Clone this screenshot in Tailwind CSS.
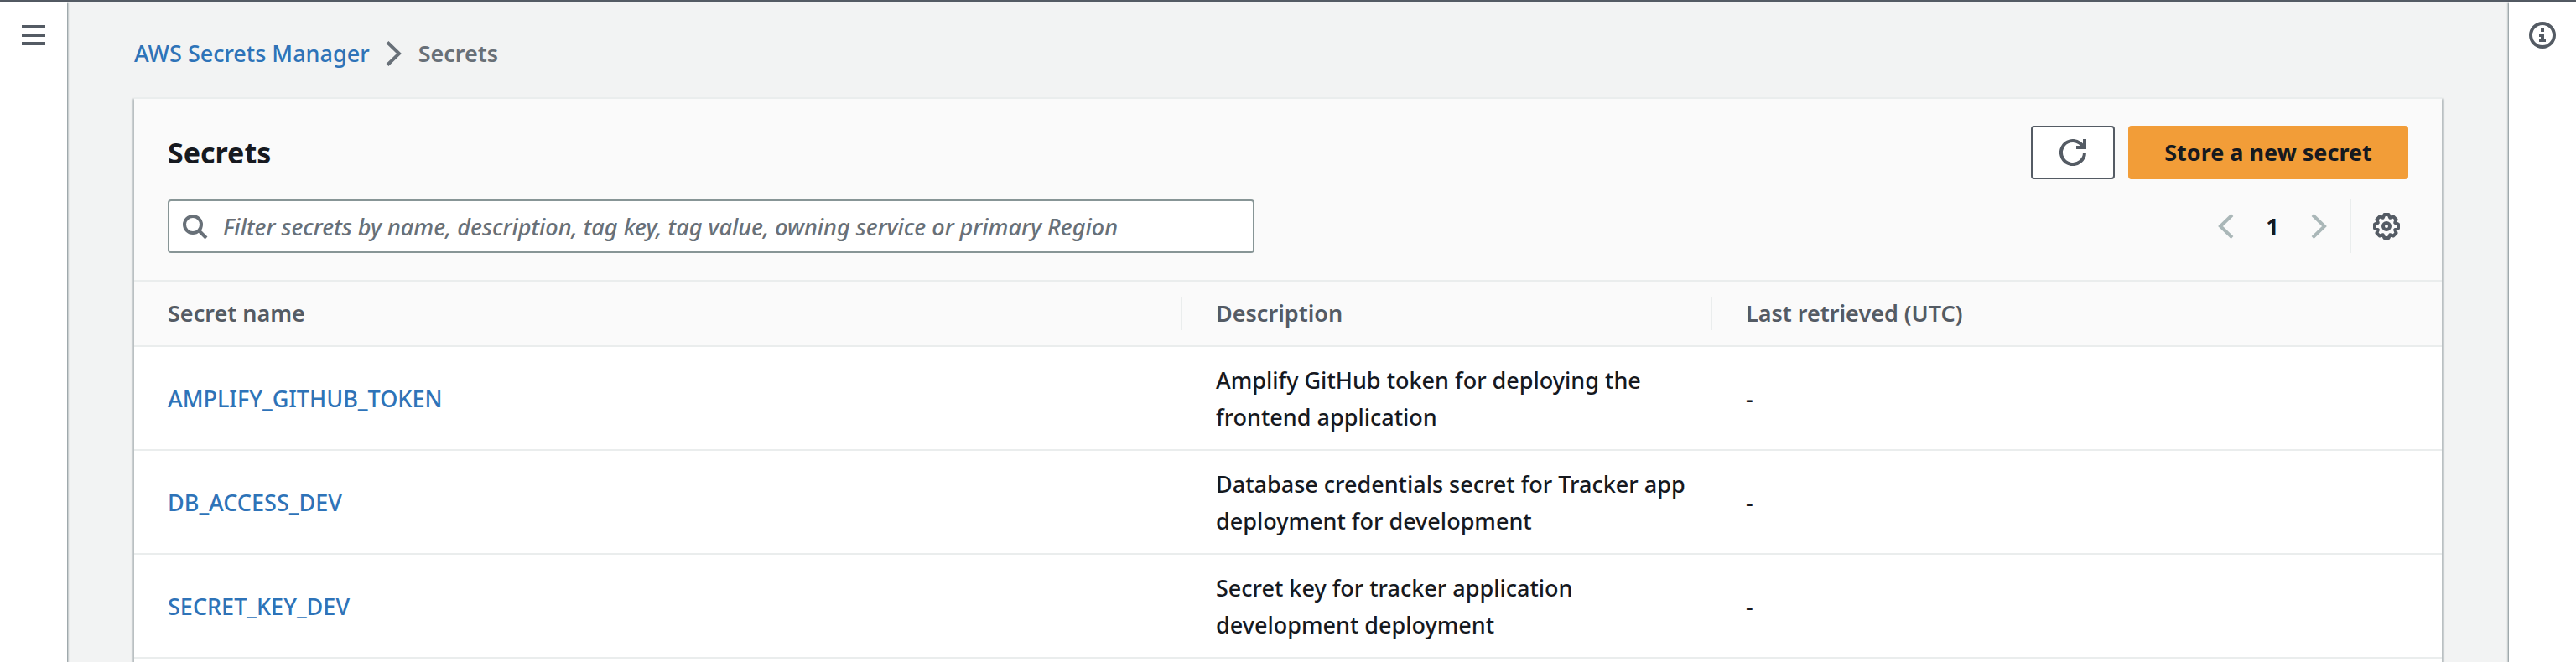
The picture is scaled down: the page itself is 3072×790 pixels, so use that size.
<!DOCTYPE html>
<html lang="en">
<head>
<meta charset="utf-8">
<title>AWS Secrets Manager</title>
<script src="https://cdn.jsdelivr.net/npm/@tailwindcss/browser@4"></script>
</head>
<body class="flex h-screen flex-col overflow-hidden bg-[#f2f3f3] font-['Noto_Sans',sans-serif] text-[27px] leading-[44px] font-medium text-[#16191f]">
<div class="h-0.5 shrink-0 bg-[#545b64]"></div>
<div class="flex min-h-0 flex-1">
  <nav class="z-10 w-20 shrink-0 bg-white pt-6 shadow-[1px_1px_2px_0_rgba(0,28,36,0.5)]" aria-label="Service navigation">
    <button type="button" aria-label="Open navigation" class="mx-auto block size-8 text-[#545b64]">
      <svg class="size-8" viewBox="0 0 32 32" fill="currentColor"><path d="M2 4h28v4H2zM2 14h28v4H2zM2 24h28v4H2z"/></svg>
    </button>
  </nav>
  <main class="flex min-w-0 flex-1 flex-col px-20">
    <nav class="flex h-[114px] shrink-0 items-start pt-10" aria-label="Breadcrumbs">
      <ol class="flex items-center">
        <li><a href="#" class="text-[#2e73b8]">AWS Secrets Manager</a></li>
        <li class="flex items-center font-semibold text-[#687078]" aria-current="page">
          <svg class="mr-3.5 ml-3 size-8" viewBox="0 0 32 32" fill="none" stroke="currentColor" stroke-width="4"><path d="M9 2.500 23 16 9 29.500"/></svg>
          Secrets
        </li>
      </ol>
    </nav>
    <section class="flex-1 border-t-2 border-[#eaeded] bg-white shadow-[2px_2px_2px_0_rgba(0,28,36,0.25),-2px_2px_2px_0_rgba(0,28,36,0.25)]">
      <header class="border-b-2 border-[#eaeded] bg-[#fafafa] px-10 py-8">
        <div class="flex h-16 items-center justify-between">
          <h1 class="text-[34px] font-bold">Secrets</h1>
          <div class="flex gap-4">
            <button type="button" aria-label="Refresh" class="flex h-16 w-[100px] items-center justify-center rounded-sm border-2 border-[#545b64] bg-white text-[#545b64]">
              <svg class="size-8" viewBox="0 0 32 32" fill="none" stroke="currentColor" stroke-width="4"><path d="M30 16A14 14 0 1 1 24.500 4.900Q27 7 29 10"/><path d="M30 0v10H20"/></svg>
            </button>
            <button type="button" class="h-16 w-[334px] rounded-sm bg-[#f29d38] font-bold">Store a new secret</button>
          </div>
        </div>
        <div class="mt-6 flex h-16 items-center justify-between">
          <label class="flex h-16 w-[1296px] items-center rounded-sm border-2 border-[#879596] bg-white pl-3.5 text-[#687078]">
            <svg class="size-8 shrink-0" viewBox="0 0 32 32" fill="none" stroke="currentColor" stroke-width="4"><circle cx="14" cy="14" r="10"/><path d="m21 21 9 9"/></svg>
            <input type="text" aria-label="Filter secrets" placeholder="Filter secrets by name, description, tag key, tag value, owning service or primary Region" class="ml-[18px] h-full min-w-0 flex-1 outline-none placeholder:text-[#687078] placeholder:italic">
          </label>
          <div class="flex items-center">
            <button type="button" aria-label="Previous page" class="text-[#aab7b8]"><svg class="size-8" viewBox="0 0 32 32" fill="none" stroke="currentColor" stroke-width="4"><path d="M24 2.500 10 16l14 13.500"/></svg></button>
            <button type="button" class="w-20 text-center font-bold" aria-current="page">1</button>
            <button type="button" aria-label="Next page" class="text-[#aab7b8]"><svg class="size-8" viewBox="0 0 32 32" fill="none" stroke="currentColor" stroke-width="4"><path d="M8 2.500 22 16 8 29.500"/></svg></button>
            <span class="mr-[26px] ml-5 h-16 w-0.5 bg-[#eaeded]"></span>
            <button type="button" aria-label="Preferences" class="mr-2.5 text-[#545b64]"><svg class="size-8" viewBox="0 0 32 32" fill="none" stroke="currentColor" stroke-width="4" stroke-linejoin="round"><path d="M13.500 2h5l1.700 3.800 3.900-1.400 3.500 3.500-1.400 3.900 3.800 1.700v5l-3.800 1.700 1.400 3.900-3.500 3.500-3.900-1.400-1.700 3.800h-5l-1.700-3.800-3.900 1.400-3.500-3.500 1.400-3.900L2 18.500v-5l3.800-1.700-1.400-3.900 3.500-3.500 3.900 1.400z"/><circle cx="16" cy="16" r="4"/></svg></button>
          </div>
        </div>
      </header>
      <table class="w-full table-fixed border-collapse text-left">
        <colgroup><col class="w-[1250px]"><col class="w-[632px]"><col></colgroup>
        <thead class="bg-[#fafafa] font-semibold text-[#545b64]">
          <tr class="border-b-2 border-[#eaeded]">
            <th class="py-[18px] font-semibold"><div class="h-10 border-r-2 border-[#eaeded] pl-10 leading-10">Secret name</div></th>
            <th class="py-[18px] font-semibold"><div class="h-10 border-r-2 border-[#eaeded] pl-10 leading-10">Description</div></th>
            <th class="py-[18px] font-semibold"><div class="h-10 pl-10 leading-10">Last retrieved (UTC)</div></th>
          </tr>
        </thead>
        <tbody>
          <tr class="border-b-2 border-[#eaeded]">
            <td class="pt-[18px] pb-4 pl-10"><a href="#" class="text-[#2e73b8]">AMPLIFY_GITHUB_TOKEN</a></td>
            <td class="pt-[18px] pr-4 pb-4 pl-10">Amplify GitHub token for deploying the frontend application</td>
            <td class="pt-[18px] pb-4 pl-10">-</td>
          </tr>
          <tr class="border-b-2 border-[#eaeded]">
            <td class="pt-[18px] pb-4 pl-10"><a href="#" class="text-[#2e73b8]">DB_ACCESS_DEV</a></td>
            <td class="pt-[18px] pr-4 pb-4 pl-10">Database credentials secret for Tracker app deployment for development</td>
            <td class="pt-[18px] pb-4 pl-10">-</td>
          </tr>
          <tr class="border-b-2 border-[#eaeded]">
            <td class="pt-[18px] pb-4 pl-10"><a href="#" class="text-[#2e73b8]">SECRET_KEY_DEV</a></td>
            <td class="pt-[18px] pr-4 pb-4 pl-10">Secret key for tracker application development deployment</td>
            <td class="pt-[18px] pb-4 pl-10">-</td>
          </tr>
        </tbody>
      </table>
    </section>
  </main>
  <aside class="z-10 w-20 shrink-0 bg-white pt-6 shadow-[-1px_1px_2px_0_rgba(0,28,36,0.5)]" aria-label="Help panel">
    <button type="button" aria-label="Open help" class="mx-auto block size-8 text-[#545b64]">
      <svg class="size-8" viewBox="0 0 32 32" fill="currentColor"><circle cx="16" cy="16" r="14" fill="none" stroke="currentColor" stroke-width="4"/><path d="M14 8h4v4h-4zM12 14h6v6h2v4h-8v-4h2v-2h-2z"/></svg>
    </button>
  </aside>
</div>
</body>
</html>
